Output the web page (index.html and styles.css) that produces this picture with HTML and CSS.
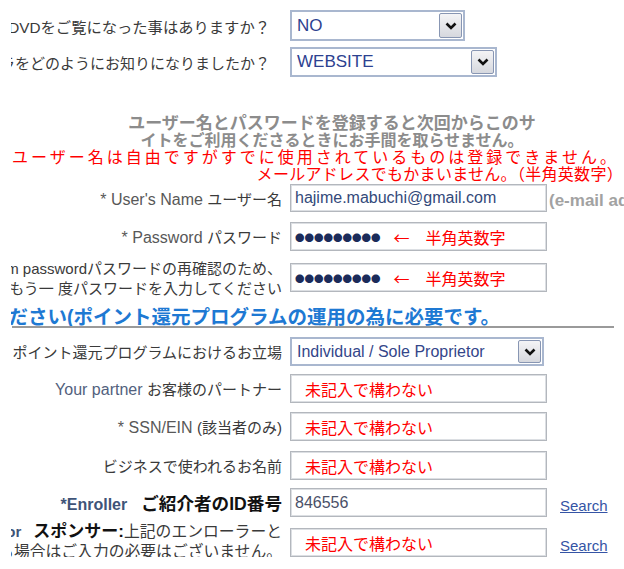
FILE: index.html
```html
<!DOCTYPE html>
<html lang="ja">
<head>
<meta charset="utf-8">
<title>登録フォーム</title>
<link rel="stylesheet" href="styles.css">
</head>
<body>
<div class="clip">
  <div class="page">
    <div class="row r-dvd">
      <div class="label q"><span>このDVDをご覧になった事はありますか？</span></div>
      <div class="select sel-no">
        <span class="sel-text">NO</span>
        <span class="sel-btn"><svg viewBox="0 0 12 8" width="12" height="8"><path d="M1.5 1.5 L6 6 L10.5 1.5" fill="none" stroke="#111" stroke-width="2.6"/></svg></span>
      </div>
    </div>
    <div class="row r-how">
      <div class="label q q2"><span>このプログラをどのようにお知りになりましたか？</span></div>
      <div class="select sel-web">
        <span class="sel-text">WEBSITE</span>
        <span class="sel-btn"><svg viewBox="0 0 12 8" width="12" height="8"><path d="M1.5 1.5 L6 6 L10.5 1.5" fill="none" stroke="#111" stroke-width="2.6"/></svg></span>
      </div>
    </div>

    <p class="blurb"><span class="b1">ユーザー名とパスワードを登録すると次回からこのサ</span><br><span class="b2">イトをご利用くださるときにお手間を取らせません。</span></p>
    <div class="note">
      <p class="note-1">ユーザー名は自由ですがすでに使用されているものは登録できません。</p>
      <p class="note-2">メールアドレスでもかまいません。（半角英数字）</p>
    </div>

    <div class="row r-user">
      <div class="label"><span><span class="en">* User's Name </span>ユーザー名</span></div>
      <div class="input"><span class="val">hajime.mabuchi@gmail.com</span></div>
      <span class="hint">(e-mail address)</span>
    </div>
    <div class="row r-pass">
      <div class="label"><span><span class="en">* Password </span>パスワード</span></div>
      <div class="input"><span class="dots">●●●●●●●●●</span><span class="arrow-note">←　半角英数字</span></div>
    </div>
    <div class="row r-conf">
      <div class="label multi conf"><span>* Confirm passwordパスワードの再確認のため、</span><span>もう一 度パスワードを入力してください</span></div>
      <div class="input"><span class="dots">●●●●●●●●●</span><span class="arrow-note">←　半角英数字</span></div>
    </div>

    <div class="heading"><span>以下の項目もご記入ください(ポイント還元プログラムの運用の為に必要です。</span></div>
    <hr class="rule">

    <div class="row r-pos">
      <div class="label"><span>ポイント還元プログラムにおけるお立場</span></div>
      <div class="select sel-pos">
        <span class="sel-text">Individual / Sole Proprietor</span>
        <span class="sel-btn"><svg viewBox="0 0 12 8" width="12" height="8"><path d="M1.5 1.5 L6 6 L10.5 1.5" fill="none" stroke="#111" stroke-width="2.6"/></svg></span>
      </div>
    </div>
    <div class="row r-std">
      <div class="label"><span><span class="en-blue">Your partner </span>お客様のパートナー</span></div>
      <div class="input"><span class="red">未記入で構わない</span></div>
    </div>
    <div class="row r-std r-ssn">
      <div class="label"><span><span class="en">* SSN/EIN </span>(該当者のみ)</span></div>
      <div class="input"><span class="red">未記入で構わない</span></div>
    </div>
    <div class="row r-std r-biz">
      <div class="label"><span>ビジネスで使われるお名前</span></div>
      <div class="input"><span class="red">未記入で構わない</span></div>
    </div>
    <div class="row r-std">
      <div class="label"><span><span class="en-bold enr">*Enroller</span><b class="jp-bold jp-enr">ご紹介者のID番号</b></span></div>
      <div class="input"><span class="val num">846556</span></div>
      <a class="search" href="#">Search</a>
    </div>
    <div class="row r-std r-spon">
      <div class="label multi spon"><span><span class="en-bold spn">*Sponsor</span><b class="jp-bold">スポンサー:</b>上記のエンローラーと</span><span>異なる場合はご入力の必要はございません。</span></div>
      <div class="input"><span class="red">未記入で構わない</span></div>
      <a class="search" href="#">Search</a>
    </div>
  </div>
</div>
</body>
</html>
```

FILE: styles.css
```css
html, body {
  margin: 0;
  padding: 0;
  background: #fff;
}
body {
  width: 624px;
  height: 569px;
  overflow: hidden;
  font-family: "Liberation Sans", "Noto Sans CJK JP", sans-serif;
  color: #3a3a3a;
}
p { margin: 0; }

.clip {
  margin-left: 11px;
  width: 613px;
  overflow: hidden;
}
.page {
  padding-top: 10px;
}

.row {
  display: flex;
  align-items: center;
  gap: 8px;
  height: 29px;
}
.label {
  flex: none;
  box-sizing: border-box;
  width: 271px;
  display: flex;
  justify-content: flex-end;
  overflow: hidden;
  white-space: nowrap;
  font-size: 15px;
  color: #3a3a3a;
}
.label.q {
  padding-right: 12px;
  font-size: 15.3px;
}
.label.q2 { font-size: 15px; }
.label.multi {
  flex-direction: column;
  align-items: flex-end;
  justify-content: center;
  line-height: 20px;
  height: 40px;
}
.label.conf { margin: -5px 0 -7px; }
.label.spon { margin: -7px 0 -5px; font-size: 15.8px; }

.en { color: #585858; font-size: 16px; }
.en-blue { color: #52617d; font-size: 16px; }
.en-bold { color: #3f5478; font-size: 15px; font-weight: bold; }
.enr { margin-right: 14px; font-size: 16px; }
.spn { margin-right: 12px; }
.jp-bold { color: #111; font-size: 17px; font-weight: bold; }
.jp-enr { font-size: 17.6px; }

/* vertical rhythm */
.r-dvd { height: 31px; }
.r-how { height: 30px; margin-top: 6px; }
.r-user { height: 28px; margin-top: 1px; }
.r-pass { margin-top: 10px; }
.r-conf { margin-top: 12px; }
.r-pos { margin-top: 9px; }
.r-std { margin-top: 8px; }
.r-ssn { margin-top: 9px; }
.r-biz { margin-top: 10px; }
.r-spon { margin-top: 11px; }

/* select look */
.select {
  flex: none;
  box-sizing: border-box;
  height: 100%;
  display: flex;
  align-items: center;
  justify-content: space-between;
  border: 2px solid #a9b7cf;
  background: #fff;
  padding: 0 1px 0 5px;
}
.sel-no { width: 175px; }
.sel-web { width: 207px; }
.sel-pos { width: 254px; }
.sel-text {
  font-size: 17px;
  color: #2d4190;
  white-space: nowrap;
}
.sel-pos .sel-text { font-size: 16px; color: #34468a; }
.sel-btn {
  box-sizing: border-box;
  width: 23px;
  height: calc(100% - 2px);
  border: 1px solid #8896b3;
  border-radius: 2px;
  background: linear-gradient(#f4f4f6, #d6d8de);
  display: flex;
  align-items: center;
  justify-content: center;
}

/* input look */
.input {
  flex: none;
  box-sizing: border-box;
  width: 257px;
  height: 100%;
  border: 1px solid #b3b7bd;
  box-shadow: inset 0 0 0 1px #dcdfe3;
  background: #fff;
  display: flex;
  align-items: center;
  padding-left: 4px;
  white-space: nowrap;
  overflow: hidden;
}
.val {
  font-size: 16px;
  color: #33497a;
}
.val.num { color: #4a5068; }
.red {
  color: #f00;
  font-size: 16px;
  padding-left: 10px;
}
.dots {
  font-family: "Noto Sans CJK JP", sans-serif;
  font-size: 9.5px;
  color: #1b2b5a;
}
.arrow-note {
  font-family: "Noto Sans CJK JP", sans-serif;
  color: #f00;
  font-size: 16px;
  margin-left: 13px;
}
.hint {
  font-size: 17px;
  font-weight: bold;
  color: #a2a2a2;
  white-space: nowrap;
  margin-left: -6px;
  padding-top: 5px;
}
.search {
  font-size: 15px;
  color: #3554a5;
  text-decoration: underline;
  margin-left: 5px;
  padding-top: 5px;
}

/* texts */
.blurb {
  margin-top: 38px;
  padding-left: 29px;
  text-align: center;
  line-height: 17px;
  font-weight: bold;
  color: #8c8c8c;
  white-space: nowrap;
}
.b1 { font-size: 17px; }
.b2 { font-size: 16px; }
.note {
  color: #f00;
  font-size: 16px;
  line-height: 17px;
  white-space: nowrap;
}
.note-1 {
  letter-spacing: 3px;
  margin-left: 1px;
}
.note-2 {
  text-align: right;
  padding-right: 1px;
  letter-spacing: 0.3px;
}

.heading {
  margin-top: 12px;
  width: 489px;
  height: 22px;
  display: flex;
  justify-content: flex-end;
  align-items: center;
  overflow: hidden;
  white-space: nowrap;
  font-size: 19.5px;
  font-weight: bold;
  color: #1e79d3;
}
.rule {
  margin: 0 10px 0 1px;
  border: 0;
  border-top: 2px solid #9a9a9a;
  height: 0;
}
```
